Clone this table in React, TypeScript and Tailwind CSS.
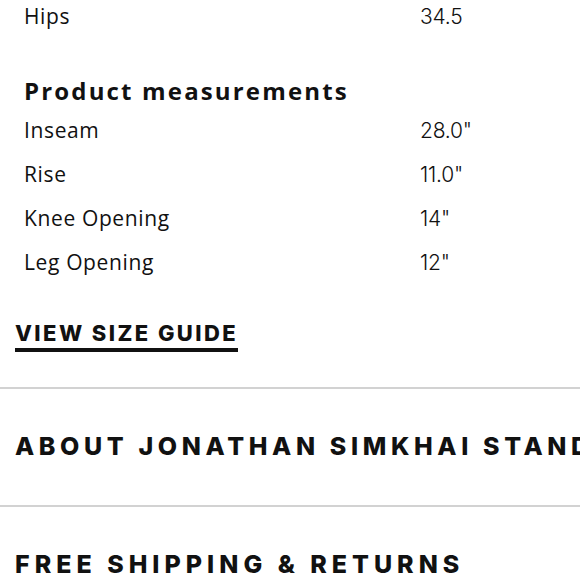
export default function App() {
  const rows = [
    { label: 'Inseam', value: '28.0"' },
    { label: 'Rise', value: '11.0"' },
    { label: 'Knee Opening', value: '14"' },
    { label: 'Leg Opening', value: '12"' },
  ]

  return (
    <div className="w-[580px] h-[580px] overflow-hidden bg-white text-[#111] font-['Open_Sans',sans-serif]">
      <div className="-mt-[5px] px-6">
        <div className="flex h-[44px] items-center text-[21px] tracking-[0.03em]">
          <span className="w-[396px]">Hips</span>
          <span className="font-['Inter',sans-serif] font-light tracking-[-0.01em]">34.5</span>
        </div>
        <h3 className="mt-[34px] h-[36px] flex items-center text-[24px] font-bold tracking-[0.09em]">
          Product measurements
        </h3>
        {rows.map((row) => (
          <div key={row.label} className="flex h-[44px] items-center text-[21px] tracking-[0.03em]">
            <span className="w-[396px]">{row.label}</span>
            <span className="font-['Inter',sans-serif] font-light tracking-[-0.01em]">{row.value}</span>
          </div>
        ))}
      </div>

      <div className="px-[15px] pt-[37px] pb-[35px] font-['Inter',sans-serif]">
        <a className="inline-block border-b-4 border-[#111] pb-[4px] text-[22px] leading-[22px] font-extrabold tracking-[0.11em] uppercase">
          View size guide
        </a>
      </div>

      <div className="border-t-2 border-[#d2d2d2] font-['Inter',sans-serif]">
        <div className="px-[15px] h-[116px] flex items-center whitespace-nowrap text-[25px] font-extrabold tracking-[0.185em] uppercase">
          About Jonathan Simkhai Standard
        </div>
      </div>
      <div className="border-t-2 border-[#d2d2d2] font-['Inter',sans-serif]">
        <div className="px-[15px] h-[116px] flex items-center whitespace-nowrap text-[25px] font-extrabold tracking-[0.2em] uppercase">
          Free Shipping &amp; Returns
        </div>
      </div>
    </div>
  )
}
